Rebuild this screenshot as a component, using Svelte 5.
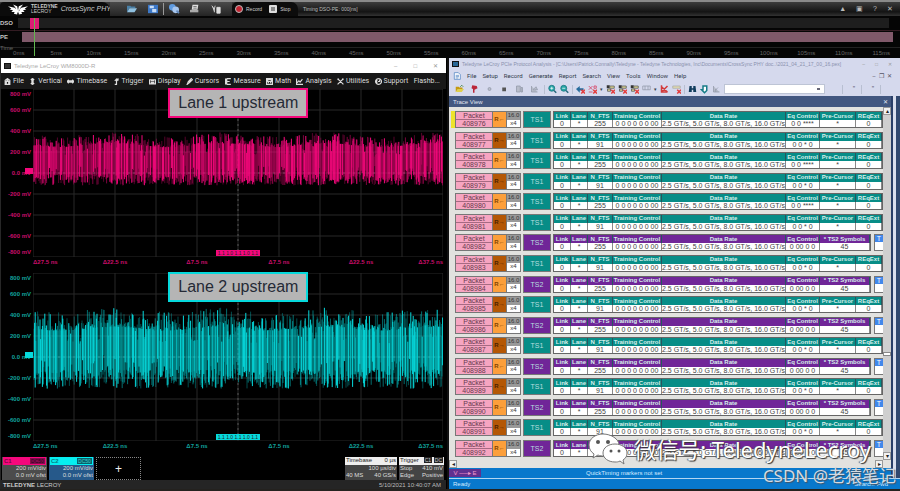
<script>
  const ticks = Array.from({ length: 24 }, (_, i) => `${i * 5}ms`);

  const scopeMenu = [
    ['file', 'File'],
    ['vertical', 'Vertical'],
    ['timebase', 'Timebase'],
    ['trigger', 'Trigger'],
    ['display', 'Display'],
    ['cursor', 'Cursors'],
    ['measure', 'Measure'],
    ['math', 'Math'],
    ['analysis', 'Analysis'],
    ['utilities', 'Utilities'],
    ['support', 'Support'],
  ];

  const scopeIcons = {
    file: 'M2 4v7h8V4L6 1zM4 11V6h4v5M4 4h4',
    vertical: 'M6 1v10M3 3l3-2 3 2M3 9l3 2 3-2M5 3h2v6H5z',
    timebase: 'M0 6h12M3 3L0 6l3 3M9 3l3 3-3 3M2 5h8v2H2z',
    trigger: 'M3 11h3V2h4M3 5l3-3 3 3',
    display: 'M1 3h10v7H1zM3 5h6M3 8h6',
    cursor: 'M2 11l2-5 5-5 2 2-5 5zM4 7l4-4M5 8l4-4',
    measure: 'M3 1v10M3 1h7M3 6h5M3 11h7M1 1v10',
    math: 'M1 1h10v10H1zM3 3h6v3H3zM3 8h2M7 8h2',
    analysis: 'M1 1v10h11M2 8l3-3 2 2 4-5',
    utilities: 'M1 1l10 10M11 1L1 11M1 3l2-2M9 1l2 2',
    support: 'M6 1a5 5 0 1 0 .1 0M4 3a4 4 0 0 0 0 6M8 3v3H5',
  };

  const volts = ['800 mV', '600 mV', '400 mV', '200 mV', '0.0 mV', '-200 mV', '-400 mV', '-600 mV', '-800 mV'];
  const offsets = ['Δ27.5 ns', 'Δ22.5 ns', 'Δ7.5 ns', 'Δ7.5 ns', 'Δ22.5 ns', 'Δ37.5 ns'];

  const traceMenu = ['File', 'Setup', 'Record', 'Generate', 'Report', 'Search', 'View', 'Tools', 'Window', 'Help'];
  const ordered = [6, 8, 10, 12, 14, 16];

  const packets = Array.from({ length: 17 }, (_, i) => {
    const ts2 = ordered.includes(i);
    const odd = i % 2 === 1;
    return {
      id: 408976 + i,
      ts2,
      odd,
      nfts: odd ? '91' : '255',
      eq: ts2 ? '0 00 0 0' : odd ? '0 0 * 0' : '0 0 ****',
    };
  });

  // Seeded noise, so that a lane looks the same on every load.
  function noise(seed) {
    let s = seed;
    return () => {
      s = (s * 16807) % 2147483647;
      return s / 2147483647;
    };
  }

  function wave(seed, top, bottom, jitter) {
    const rand = noise(seed);
    const layers = ['', '', ''];
    for (let x = 1; x < 410; x += 0.6) {
      const a = top + Math.sin(x / 17) * 2 + (rand() ** 2 - 0.3) * -jitter;
      const b = bottom + (rand() - 0.6) * jitter;
      const full = rand();
      const y1 = full > 0.85 ? a + (b - a) * 0.25 : a;
      const y2 = full < 0.15 ? b - (b - a) * 0.25 : b;
      const layer = Math.floor(rand() * 3);
      layers[layer] += `M${x.toFixed(1)} ${y1.toFixed(1)}V${y2.toFixed(1)}`;
    }
    return layers;
  }

  const lanes = [
    { name: 'Lane 1 upstream', tone: 'pink', wave: wave(4711, 53, 92, 11) },
    { name: 'Lane 2 upstream', tone: 'cyan', wave: wave(9127, 50, 108, 19) },
  ];
</script>

{#snippet cross()}
  <path d="M7 7l5 5m0-5l-5 5" stroke="#e43c3c" stroke-width="2" />
{/snippet}

<div class="page">
  <header class="sync">
    <div class="sync-bar">
      <div class="brand">
        <svg class="logo" viewBox="0 0 24 12" aria-hidden="true">
          <path
            d="M0 2l8 2 3 3v5l-4-1 1-2-4 0 2-2-4-1 2-1zM6 0l5 2 1 5 1-5 5-2-3 4-3 7-3-7zM24 2l-8 2-3 3v5l4-1-1-2 4 0-2-2 4-1-2-1z"
            fill="#fff"
          />
        </svg>
        <span class="maker">TELEDYNE<br /><small>LECROY</small></span>
        <i>CrossSync PHY</i>
      </div>
      <div class="tools">
        <button aria-label="Open">
          <svg viewBox="0 0 14 12"><path d="M1 10V2h4l1 1h5v2H4z" fill="#4a7fa5" /><path d="M1 10l3-5h9l-3 5z" fill="#8fc0e0" /></svg>
        </button>
        <button aria-label="Save">
          <svg viewBox="0 0 14 12"><path d="M1 1h12v10H1z" fill="#3c78c8" /><path d="M3 2h5v3H3zM6 6h5v4H6z" fill="#c6dcf6" /></svg>
        </button>
        <span class="rule"></span>
        <button aria-label="Find">
          <svg viewBox="0 0 14 12"><circle cx="5" cy="4" r="4" fill="#5f9be0" /><circle cx="9" cy="7" r="4" fill="#a7c6ee" /><path d="M10 8l3 3" stroke="#6289bd" stroke-width="2" /></svg>
        </button>
        <button aria-label="Export">
          <svg viewBox="0 0 14 12"><path d="M4 1h7l-1 6H3z" fill="#ddd" /><path d="M1 7h10v3H1z" fill="#aaa" /><path d="M5 3h4M5 5h4" stroke="#666" /></svg>
        </button>
        <button aria-label="Settings">
          <svg viewBox="0 0 14 12"><path d="M2 2l3 4v4M6 2L5 6M8 4h4v7H8z" fill="#ddd" stroke="#ddd" /></svg>
        </button>
      </div>
      <div class="capture">
        <button><span class="dot"></span>Record</button>
        <button><span class="square"></span>Stop</button>
      </div>
      <span class="timing">Timing DSO-PE: 000[ns]</span>
      <div class="sync-end">
        <button>▲</button><button>▣</button><button>?</button><button>✕</button>
      </div>
    </div>
    <div class="timeline">
      <div class="track dso"><b>DSO</b><span class="range"></span></div>
      <div class="track pe"><b>PE</b><span class="range"></span></div>
      <div class="axis">
        <b>Time</b>
        <div class="ticks">
          {#each ticks as tick}<span>{tick}</span>{/each}
        </div>
      </div>
      <span class="mark"></span>
      <span class="needle"></span>
    </div>
  </header>

  <main>
    <section class="scope">
      <div class="scope-title">
        <span class="app-icon"></span>
        <span>Teledyne LeCroy WM8000D-R</span>
        <div class="win"><button>–</button><button>□</button><button>✕</button></div>
      </div>
      <nav class="scope-menu">
        {#each scopeMenu as [icon, label]}
          <button>
            <svg viewBox="0 0 12 12" aria-hidden="true"><path d={scopeIcons[icon]} /></svg>{label}
          </button>
        {/each}
        <button>Flashb...</button>
      </nav>

      <div class="lanes">
        {#each lanes as lane}
          <div class="lane {lane.tone}">
            <div class="volts">
              {#each volts as v}<span>{v}</span>{/each}
            </div>
            <div class="plot">
              <svg viewBox="0 0 410 168" preserveAspectRatio="none" aria-label={lane.name}>
                <g class="grid">
                  {#each Array(9) as _, i}<path d="M0 {i * 21}H410" />{/each}
                  {#each Array(11) as _, i}<path d="M{i * 41} 0V168" />{/each}
                </g>
                <path class="center" d="M205 0V168M0 84H410" />
                {#each lane.wave as d, i}<path class="wave w{i}" {d} />{/each}
              </svg>
              <span class="zero"></span>
              <span class="strip">1.1 1.0 1.1 1.0 1.1</span>
              <strong>{lane.name}</strong>
            </div>
            <div class="offsets">
              {#each offsets as o}<span>{o}</span>{/each}
            </div>
          </div>
        {/each}
      </div>

      <div class="channels">
        <button class="channel c1">
          <span class="head"><b>C1</b><em>DC50</em></span>
          <span>200 mV/div</span><span>0.0 mV ofst</span>
        </button>
        <button class="channel c2">
          <span class="head"><b>C2</b><em>DC50</em></span>
          <span>200 mV/div</span><span>0.0 mV ofst</span>
        </button>
        <button class="add" aria-label="Add trace">+</button>
        <div class="setup">
          <span class="cap"><span>Timebase</span><span>0 µs</span></span>
          <span><span></span><span>100 µs/div</span></span>
          <span><span>40 MS</span><span>40 GS/s</span></span>
        </div>
        <div class="setup">
          <span class="cap"><span>Trigger</span><span><em>C1</em> <em>DC</em></span></span>
          <span><span>Stop</span><span>410 mV</span></span>
          <span><span>Edge</span><span>Positive</span></span>
        </div>
      </div>
      <footer class="scope-foot">
        <span><b>TELEDYNE</b> LECROY</span><time>5/10/2021 10:40:07 AM</time>
      </footer>
    </section>

    <section class="protocol">
      <div class="trace-title">
        <span class="app-icon"></span>
        <span>Teledyne LeCroy PCIe Protocol Analysis - [C:\Users\Patrick.Connally\Teledyne - Teledyne Technologies, Inc\Documents\CrossSync PHY doc..\2021_04_21_17_00_16.pex]</span>
        <div class="win"><button>–</button><button>□</button><button>✕</button></div>
      </div>
      <nav class="trace-menu">
        <svg viewBox="0 0 12 12" aria-hidden="true"><path d="M2 1h6l3 3v7H2z" fill="#fff" stroke="#4079bd" /><path d="M4 5h5M4 7h5M4 9h4" stroke="#4079bd" /></svg>
        {#each traceMenu as item}<button>{item}</button>{/each}
        <div class="win"><button>–</button><button>❐</button><button>✕</button></div>
      </nav>
      <div class="trace-tools">
        <div class="main-tools">
          <button aria-label="Open trace">
            <svg viewBox="0 0 12 12"><path d="M1 10V3h4l1 1h4v2H4z" fill="#c59a10" /><path d="M1 10l3-4h8l-3 4z" fill="#dfd04c" /><path d="M7 3l2-2 2 2" stroke="#287828" /></svg>
          </button>
          <button aria-label="Flag">
            <svg viewBox="0 0 12 12"><path d="M3 1l6 1 1 3-4 2v4H4V6L2 5z" fill="#bb2638" /></svg>
          </button>
          <button aria-label="Record" class="dim"><svg viewBox="0 0 12 12"><circle cx="6" cy="6" r="2" /></svg></button>
          <button aria-label="Stop"><svg viewBox="0 0 12 12"><path d="M3 4h5v5H3z" fill="#555" /></svg></button>
          <button aria-label="Upload" class="dim"><svg viewBox="0 0 12 12"><path d="M2 2h5v8H2zM8 4h2v6H8z" /></svg></button>
          <button aria-label="Repeat" class="dim"><svg viewBox="0 0 12 12"><path d="M2 2v8h8M4 7l4-4 2 4z" /></svg></button>
        </div>
        <span class="rule"></span>
        {#each ['in', 'out'] as z}
          <button aria-label="Zoom {z}">
            <svg viewBox="0 0 12 12"><circle cx="5" cy="5" r="4" fill="#27a6a6" stroke="#17727e" /><path d={z === 'in' ? 'M3 5h4M5 3v4' : 'M3 5h4'} stroke="#fff" /><path d="M8 8l3 3" stroke="#27687d" stroke-width="2" /></svg>
          </button>
        {/each}
        <span class="rule"></span>
        <button aria-label="Go to"><svg viewBox="0 0 12 12"><path d="M0 6l5-4v3h5v3H5v3z" fill="#276c9d" />{@render cross()}</svg></button>
        <button aria-label="Hide lanes"><svg viewBox="0 0 12 12"><path d="M1 2l5 5M6 2L1 7M1 10h5M8 2h3v3H8z" stroke="#d63658" />{@render cross()}</svg></button>
        <span class="arrow">▾</span>
        {#each ['Idle', 'TS', 'SKIP'] as kind}
          <button aria-label="Hide {kind}"><svg viewBox="0 0 12 12"><path d="M1 1h4v4H1z" fill="#333" /><path d="M5 2h6v3H5zM2 6h4v3H2z" fill="#dad391" stroke="#555" />{@render cross()}</svg></button>
        {/each}
        <button aria-label="Columns" class="dim"><svg viewBox="0 0 12 12"><path d="M1 2h10v5H1zM4 2v5M8 2v5" fill="none" /></svg></button>
        <span class="arrow">▾</span>
        <button aria-label="Clear"><svg viewBox="0 0 12 12"><path d="M2 1v9h8M2 3l8 7M10 2l-8 8" stroke="#d33b3b" stroke-width="2" /></svg></button>
        <button aria-label="Clear filter"><svg viewBox="0 0 12 12"><path d="M1 2h10v3H1z" fill="#e1dcb0" stroke="#aaa" />{@render cross()}</svg></button>
        <span class="rule"></span>
        <button aria-label="Search"><svg viewBox="0 0 12 12"><path d="M2 2h3v3h2V2h3l1 8H7V7H5v3H1z" fill="#103c5c" /></svg></button>
        <button aria-label="Search again"><svg viewBox="0 0 12 12"><path d="M4 2h5v6L6 11 2 7h2z" fill="#fff" stroke="#177c87" stroke-width="2" /></svg></button>
        <button aria-label="Previous" class="dim"><svg viewBox="0 0 12 12"><path d="M2 2v8h8M4 8l4-4M5 10V6" /></svg></button>
        <select aria-label="Search text"><option></option></select>
        <div class="grips"><span>”</span><span>”</span><span></span></div>
      </div>
      <div class="trace-body">
        <div class="trace">
          <div class="trace-head"><span>Trace View</span><button aria-label="Close trace view">✕</button></div>
          <div class="viewer">
            <div class="packets">
              {#each packets as p, i (p.id)}
                <article class="packet" class:ts2={p.ts2} class:odd={p.odd} class:current={i === 0}>
                  <div class="ident"><span>Packet</span><span>{p.id}</span></div>
                  <div class="direction">{p.odd ? 'R→' : 'R←'}</div>
                  <div class="speed"><span>16.0</span><span>x4</span></div>
                  <div class="kind">{p.ts2 ? 'TS2' : 'TS1'}</div>
                  <table>
                    <colgroup>
                      <col class="link" /><col class="lane-no" /><col class="nfts" /><col class="training" />
                      <col /><col class="eq" /><col class={p.ts2 ? 'symbols' : 'pre'} />
                      {#if !p.ts2}<col class="req" />{/if}
                    </colgroup>
                    <thead>
                      <tr>
                        <th>Link</th><th>Lane</th><th>N_FTS</th><th>Training Control</th><th>Data Rate</th><th>Eq Control</th>
                        {#if p.ts2}<th>* TS2 Symbols</th>{:else}<th>Pre-Cursor</th><th>REqExt</th>{/if}
                      </tr>
                    </thead>
                    <tbody>
                      <tr>
                        <td>0</td><td>*</td><td>{p.nfts}</td><td>0 0 0 0 0 0 00</td>
                        <td>2.5 GT/s, 5.0 GT/s, 8.0 GT/s, 16.0 GT/s</td><td>{p.eq}</td>
                        {#if p.ts2}<td>45</td>{:else}<td>*</td><td>0</td>{/if}
                      </tr>
                    </tbody>
                  </table>
                  {#if p.ts2}<div class="more"><span>T</span></div>{/if}
                </article>
              {/each}
            </div>
            <div class="vscroll"><button aria-label="Scroll up">▴</button><span class="thumb"></span><button aria-label="Scroll down">▾</button></div>
          </div>
          <div class="hscroll"><button aria-label="Scroll left">◂</button><button aria-label="Scroll right">▸</button></div>
          <div class="quick"><span class="marker">V ──▸ E</span><span>QuickTiming markers not set</span></div>
        </div>
        <aside></aside>
      </div>
      <footer class="status"><span>Ready</span><span>Search: Fwd</span></footer>
    </section>
  </main>

  <div class="channel-mark">
    <svg viewBox="0 0 40 32" aria-hidden="true">
      <path d="M15 1C7 1 1 6 1 12c0 4 2 7 5 9l-1 4 5-3c2 1 4 1 6 1 8 0 15-5 15-11S23 1 15 1z" fill="#fff" stroke="#777" />
      <path d="M27 11c-7 0-12 4-12 9s5 9 12 9c2 0 3 0 5-1l4 3-1-4c3-2 4-4 4-7 0-5-5-9-12-9z" fill="#fff" stroke="#777" />
      <g fill="#555"><circle cx="10" cy="9" r="2" /><circle cx="20" cy="9" r="2" /><circle cx="23" cy="18" r="1.5" /><circle cx="31" cy="18" r="1.5" /></g>
    </svg>
    <span>微信号: TeledyneLecroy</span>
  </div>
  <div class="credit">CSDN @老猿笔记</div>
</div>

<style>
  :global(body) {
    margin: 0;
    background: #161719;
  }

  .page {
    position: relative;
    display: flex;
    flex-direction: column;
    box-sizing: border-box;
    min-height: 100vh;
    padding-bottom: 2px;
    overflow: hidden;
    background: #24221f;
    font: 7px/8px 'Liberation Sans', Arial, sans-serif;
  }

  .page * {
    box-sizing: border-box;
  }

  button {
    padding: 0;
    border: 0;
    background: none;
    color: inherit;
    font: inherit;
    white-space: nowrap;
  }

  svg {
    display: block;
    flex: none;
    fill: none;
  }

  .rule {
    flex: none;
    width: 1px;
  }

  .sync {
    background: #050505;
    color: #999;
  }

  .sync-bar {
    display: flex;
    align-items: stretch;
    height: 16px;
    border-top: 2px solid #8a8a8a;
    background: linear-gradient(#3c3c3c, #141414 70%, #333);
  }

  .brand {
    display: flex;
    align-items: center;
    gap: 3px;
    width: 110px;
    padding-left: 8px;
    border-radius: 4px 8px 0 0;
    background: #0b0b0b;
    color: #ccc;
    white-space: nowrap;
  }

  .logo {
    width: 20px;
    height: 11px;
  }

  .maker {
    font-size: 5px;
    font-weight: 700;
    line-height: 5px;
  }

  .maker small {
    font-size: 5px;
    font-weight: 400;
  }

  .tools {
    display: flex;
    align-items: center;
    gap: 9px;
    width: 122px;
    padding-left: 16px;
    background: linear-gradient(#4a4a4a, #242424);
  }

  .tools svg {
    width: 12px;
    height: 10px;
  }

  .tools .rule {
    height: 12px;
    margin: 0 -5px;
    background: #999;
  }

  .capture {
    display: flex;
    align-items: center;
    gap: 7px;
    width: 66px;
    padding-left: 3px;
    border-radius: 5px 7px 0 0;
    background: #0c0c0c;
    color: #ccc;
    font-size: 5px;
  }

  .capture button {
    display: flex;
    align-items: center;
    gap: 3px;
  }

  .dot,
  .square {
    width: 8px;
    height: 8px;
    border: 1px solid #bbb;
    border-radius: 50%;
    background: #c32532;
  }

  .square {
    border: 2px solid #ddd;
    border-radius: 1px;
    background: #888;
  }

  .timing {
    align-self: center;
    margin-left: 5px;
    color: #bbb;
    font-size: 5px;
  }

  .sync-end {
    display: flex;
    align-items: center;
    gap: 10px;
    margin-left: auto;
    padding-right: 7px;
    color: #bbb;
  }

  .timeline {
    position: relative;
    padding-bottom: 1px;
  }

  .track {
    display: flex;
    align-items: center;
    height: 12px;
    margin-top: 1px;
  }

  .track b,
  .axis b {
    width: 18px;
    font-size: 6px;
  }

  .track b {
    color: #c4c4c4;
  }

  .range {
    flex: 1;
    height: 10px;
    margin-right: 11px;
    background: #1e1e1e;
  }

  .pe {
    border-top: 1px solid #331b22;
  }

  .pe .range {
    margin: 0 7px 0 4px;
    background: #80596a;
  }

  .axis {
    height: 15px;
    color: #666;
  }

  .axis b {
    display: block;
    height: 5px;
    padding-top: 3px;
    font-weight: 400;
    line-height: 6px;
  }

  .ticks {
    display: grid;
    grid-template-columns: repeat(24, 1fr);
    border-top: 1px solid #222;
    text-align: center;
    font-size: 6px;
    line-height: 11px;
  }

  .mark,
  .needle {
    position: absolute;
    top: 1px;
    left: 30px;
    width: 9px;
    height: 11px;
    background: #db1d76;
  }

  .needle {
    left: 34px;
    width: 1px;
    height: 38px;
    background: #62b74f;
  }

  main {
    display: grid;
    flex: 1;
    grid-template-columns: minmax(0, 447fr) minmax(0, 451fr);
    column-gap: 2px;
    background: #111;
  }

  .scope,
  .protocol {
    display: flex;
    flex-direction: column;
    min-width: 0;
  }

  .scope {
    padding-right: 1px;
    border-left: 1px solid #272727;
    background: #000;
    color: #ccc;
  }

  .scope-title,
  .trace-title {
    display: flex;
    align-items: center;
    gap: 3px;
    height: 15px;
    padding-left: 3px;
    background: #fff;
    color: #aaa;
    white-space: nowrap;
  }

  .scope-title {
    font-size: 6px;
  }

  .app-icon {
    flex: none;
    width: 7px;
    height: 6px;
    border: 1px solid #111;
    background: #333;
  }

  .win {
    display: flex;
    gap: 16px;
    margin-left: auto;
    padding-right: 8px;
    color: #999;
  }

  .scope-menu {
    display: flex;
    align-items: center;
    justify-content: space-between;
    height: 16px;
    padding: 0 6px 0 3px;
    background: #181818;
    color: #ddd;
    font-family: Roboto, 'Liberation Sans', sans-serif;
  }

  .scope-menu button {
    display: flex;
    align-items: center;
    gap: 2px;
  }

  .scope-menu svg {
    width: 7px;
    height: 7px;
    stroke: #ddd;
    stroke-width: 2;
  }

  .lanes {
    display: flex;
    flex: 1;
    flex-direction: column;
  }

  .lane {
    display: grid;
    flex: 1;
    grid-template: minmax(160px, 1fr) 16px / 32px minmax(0, 1fr);
    padding-right: 3px;
    --tone: #f5087c;
    --text: #c80e6a;
  }

  .lane.cyan {
    --tone: #06d9dc;
    --text: #11a29d;
  }

  .volts {
    display: flex;
    flex-direction: column;
    padding-right: 2px;
    color: var(--text);
    font-size: 6px;
    font-weight: 700;
    text-align: right;
    white-space: nowrap;
  }

  .volts span,
  .offsets span {
    display: flex;
    flex: 2 0 0;
    align-items: center;
    justify-content: flex-end;
    min-height: 0;
  }

  .volts span:first-child,
  .volts span:last-child {
    flex-grow: 1;
  }

  .plot {
    position: relative;
  }

  .plot svg {
    position: absolute;
    width: 100%;
    height: 100%;
  }

  .grid {
    stroke: #282828;
  }

  .center {
    stroke: #555;
    stroke-dasharray: 2 3;
  }

  .wave {
    stroke: var(--tone);
    stroke-width: 1;
  }

  .w0 {
    opacity: 0.35;
  }

  .w1 {
    opacity: 0.5;
  }

  .zero {
    position: absolute;
    top: 47%;
    left: -8px;
    width: 8px;
    height: 6px;
    background: var(--tone);
  }

  .strip {
    position: absolute;
    bottom: 1px;
    left: 50%;
    width: 44px;
    height: 6px;
    margin-left: -22px;
    background: var(--tone);
    color: #222;
    font-size: 5px;
    line-height: 6px;
    text-align: center;
    white-space: nowrap;
  }

  .plot strong {
    position: absolute;
    top: -1px;
    left: 33%;
    padding: 3px 8px;
    border: 2px solid var(--tone);
    background: #b5b5b5;
    color: #252a36;
    font-size: 16px;
    font-weight: 400;
    line-height: 20px;
    white-space: nowrap;
  }

  .offsets {
    display: flex;
    grid-column: 2;
    height: 9px;
    color: var(--text);
    font-size: 6px;
    font-weight: 700;
    white-space: nowrap;
  }

  .offsets span {
    justify-content: center;
  }

  .offsets span:first-child {
    flex-grow: 1;
    justify-content: flex-start;
  }

  .offsets span:last-child {
    flex-grow: 1;
    justify-content: flex-end;
  }

  .channels {
    display: flex;
    gap: 2px;
    height: 23px;
    padding: 0 2px 0 1px;
    font-size: 6px;
  }

  .channel {
    display: flex;
    flex-direction: column;
    width: 45px;
    padding: 0 1px;
    background: #4c4c4c;
    color: #ddd;
    line-height: 7px;
    text-align: right;
  }

  .head {
    display: flex;
    justify-content: space-between;
    height: 8px;
    padding: 1px;
    background: #f5087c;
    color: #7c0640;
    line-height: 6px;
  }

  .head em {
    width: 15px;
    background: #850b4d;
    color: #28051a;
    font-size: 5px;
    font-style: normal;
    text-align: center;
  }

  .channel.c2 {
    background: #26598a;
  }

  .c2 .head {
    background: #06eef0;
    color: #087d84;
  }

  .c2 .head em {
    background: #06636b;
    color: #4cc;
  }

  .add {
    width: 45px;
    margin-right: auto;
    border: 1px dotted #888;
    color: #eee;
    font-size: 12px;
  }

  .setup {
    width: 52px;
    background: #444;
    color: #ddd;
    line-height: 7px;
    white-space: nowrap;
  }

  .setup + .setup {
    width: 45px;
  }

  .setup > span {
    display: flex;
    justify-content: space-between;
    padding: 0 1px;
  }

  .setup .cap {
    height: 8px;
    background: #eee;
    color: #222;
  }

  .setup em {
    padding: 0 1px;
    background: #222;
    color: #ccc;
    font-size: 5px;
    font-style: normal;
  }

  .scope-foot {
    display: flex;
    justify-content: space-between;
    height: 9px;
    padding: 1px 5px 0 2px;
    background: #252525;
    font-size: 6px;
  }

  .scope-foot time {
    color: #bbb;
  }

  .protocol {
    background: #d5d9ed;
    color: #333b4c;
  }

  .trace-title {
    height: 12px;
    background: #d5d9ed;
    color: #8a91ad;
    font-size: 5px;
  }

  .trace-title .app-icon {
    background: #286695;
  }

  .trace-title .win {
    gap: 10px;
  }

  .trace-menu {
    display: flex;
    align-items: center;
    gap: 6px;
    height: 12px;
    padding-left: 4px;
    font: 6px/8px Roboto, 'Liberation Sans', sans-serif;
  }

  .trace-menu svg {
    width: 8px;
    height: 8px;
  }

  .trace-menu .win {
    gap: 3px;
    color: #556;
  }

  .trace-tools {
    display: flex;
    align-items: center;
    gap: 3px;
    height: 14px;
    padding-left: 6px;
  }

  .main-tools {
    display: flex;
    gap: 6px;
    margin-right: 2px;
  }

  .trace-tools svg {
    width: 9px;
    height: 10px;
  }

  .trace-tools .rule {
    height: 9px;
    background: #b8bfd1;
  }

  .trace-tools .arrow {
    width: 3px;
    font-size: 5px;
  }

  .dim svg {
    fill: #b8bdcb;
    stroke: #9298a8;
  }

  select {
    width: 101px;
    height: 10px;
    border: 1px solid #bdc4d5;
    appearance: none;
    background: linear-gradient(#667, #667) 96% 50% / 3px 2px no-repeat #fff;
    font-size: 6px;
  }

  .grips {
    display: flex;
    gap: 6px;
    margin-left: 14px;
    color: #667;
  }

  .grips span {
    width: 13px;
    height: 9px;
    border-left: 1px solid #b8bfd1;
    text-align: right;
  }

  .trace-body {
    display: flex;
    flex: 1;
    min-height: 0;
  }

  .trace {
    display: flex;
    flex: 1;
    flex-direction: column;
    min-width: 0;
    border-right: 2px solid #293e68;
    background: #d7d7d7;
  }

  aside {
    width: 7px;
    border-right: 4px solid #31486f;
    background: #d9deed;
  }

  .trace-head {
    display: flex;
    align-items: center;
    justify-content: space-between;
    height: 11px;
    padding: 0 3px 0 4px;
    background: #425780;
    color: #e0e5f1;
    font-size: 6px;
  }

  .viewer {
    display: flex;
    flex: 1;
  }

  .packets {
    display: flex;
    flex: 1;
    flex-direction: column;
    justify-content: space-between;
    min-width: 0;
    padding: 4px 0 3px 6px;
    background: #e2e2df;
  }

  .packet {
    display: flex;
    height: 17px;
    --shade: #078d87;
  }

  .packet.ts2 {
    --shade: #702698;
  }

  .packet.current {
    margin-left: -4px;
    border-left: 4px solid #eee42b;
  }

  .packet > div {
    border: 1px solid #777;
    text-align: center;
    line-height: 7px;
  }

  .ident,
  .speed {
    display: flex;
    flex-direction: column;
    width: 38px;
    background: #f6a5c1;
    color: #66394d;
  }

  .ident span,
  .speed span {
    flex: 1;
  }

  .ident span + span {
    border-top: 1px solid #a66a82;
  }

  .packet .direction {
    width: 14px;
    border-left: 0;
    background: #fc9f3b;
    color: #824300;
    font-size: 6px;
    font-weight: 700;
    line-height: 15px;
  }

  .packet.odd .direction {
    background: #b45705;
    color: #4a2201;
  }

  .packet .speed {
    width: 14px;
    margin-right: 2px;
    border-left: 0;
    background: #fff;
    color: #333;
    font-size: 6px;
  }

  .speed span:first-child {
    background: #999;
  }

  .packet .kind {
    width: 28px;
    margin-right: 2px;
    background: var(--shade);
    color: #b9dddf;
    line-height: 15px;
  }

  table {
    flex: 1;
    width: 0;
    height: 17px;
    border: 1px solid #666;
    border-spacing: 0;
    background: #fff;
    color: #444;
    table-layout: fixed;
  }

  th,
  td {
    height: 7px;
    padding: 0;
    border-right: 1px solid #888;
    line-height: 7px;
    text-align: center;
    white-space: nowrap;
  }

  th {
    height: 8px;
    border-color: #27565e;
    background: var(--shade);
    color: #d7f0ec;
    font-size: 6px;
    font-weight: 700;
  }

  .link {
    width: 17px;
  }

  .lane-no {
    width: 17px;
  }

  .nfts {
    width: 25px;
  }

  .training {
    width: 49px;
  }

  .eq {
    width: 34px;
  }

  .pre {
    width: 36px;
  }

  .symbols {
    width: 50px;
  }

  .req {
    width: 26px;
  }

  .packet .more {
    width: 9px;
    margin-left: 3px;
    border-right: 0;
    background: #fff;
    color: #fff;
  }

  .more span {
    display: block;
    background: #4187eb;
  }

  .vscroll {
    display: flex;
    flex-direction: column;
    justify-content: space-between;
    width: 8px;
    background: #cfcfcf;
  }

  .vscroll button,
  .hscroll button {
    width: 8px;
    height: 8px;
    border: 1px solid #999;
    background: #f1f1f1;
    color: #222;
    font-size: 6px;
    line-height: 6px;
  }

  .thumb {
    height: 4px;
    margin-top: auto;
    margin-bottom: 96px;
    border: 1px solid #888;
    background: #fff;
  }

  .hscroll {
    display: flex;
    justify-content: space-between;
    padding-right: 8px;
    background: #e2e2df;
  }

  .quick {
    display: flex;
    align-items: center;
    height: 10px;
    background: #0878cc;
    color: #d6eaff;
    font-size: 6px;
  }

  .marker {
    width: 32px;
    margin-right: 105px;
    background: #60308f;
    color: #f49bce;
    text-align: center;
  }

  .status {
    display: flex;
    justify-content: space-between;
    height: 11px;
    padding: 1px 12px 0 4px;
    border-top: 1px solid #b3d6f2;
    background: #0878cc;
    color: #d6eaff;
    font-size: 6px;
  }

  .channel-mark,
  .credit {
    position: absolute;
    display: flex;
    align-items: center;
    gap: 6px;
    right: 29px;
    bottom: 26px;
    color: #fff;
    font: 22px/30px 'Noto Sans', 'Noto Sans CJK SC', sans-serif;
    text-shadow: 1px 1px 1px #333, -1px 0 1px #555;
    white-space: nowrap;
  }

  .channel-mark svg {
    width: 40px;
    height: 32px;
  }

  .credit {
    right: 4px;
    bottom: 3px;
    color: #d3dae2;
    font-size: 17px;
    line-height: 24px;
    text-shadow: 1px 1px 1px #456;
  }
</style>
